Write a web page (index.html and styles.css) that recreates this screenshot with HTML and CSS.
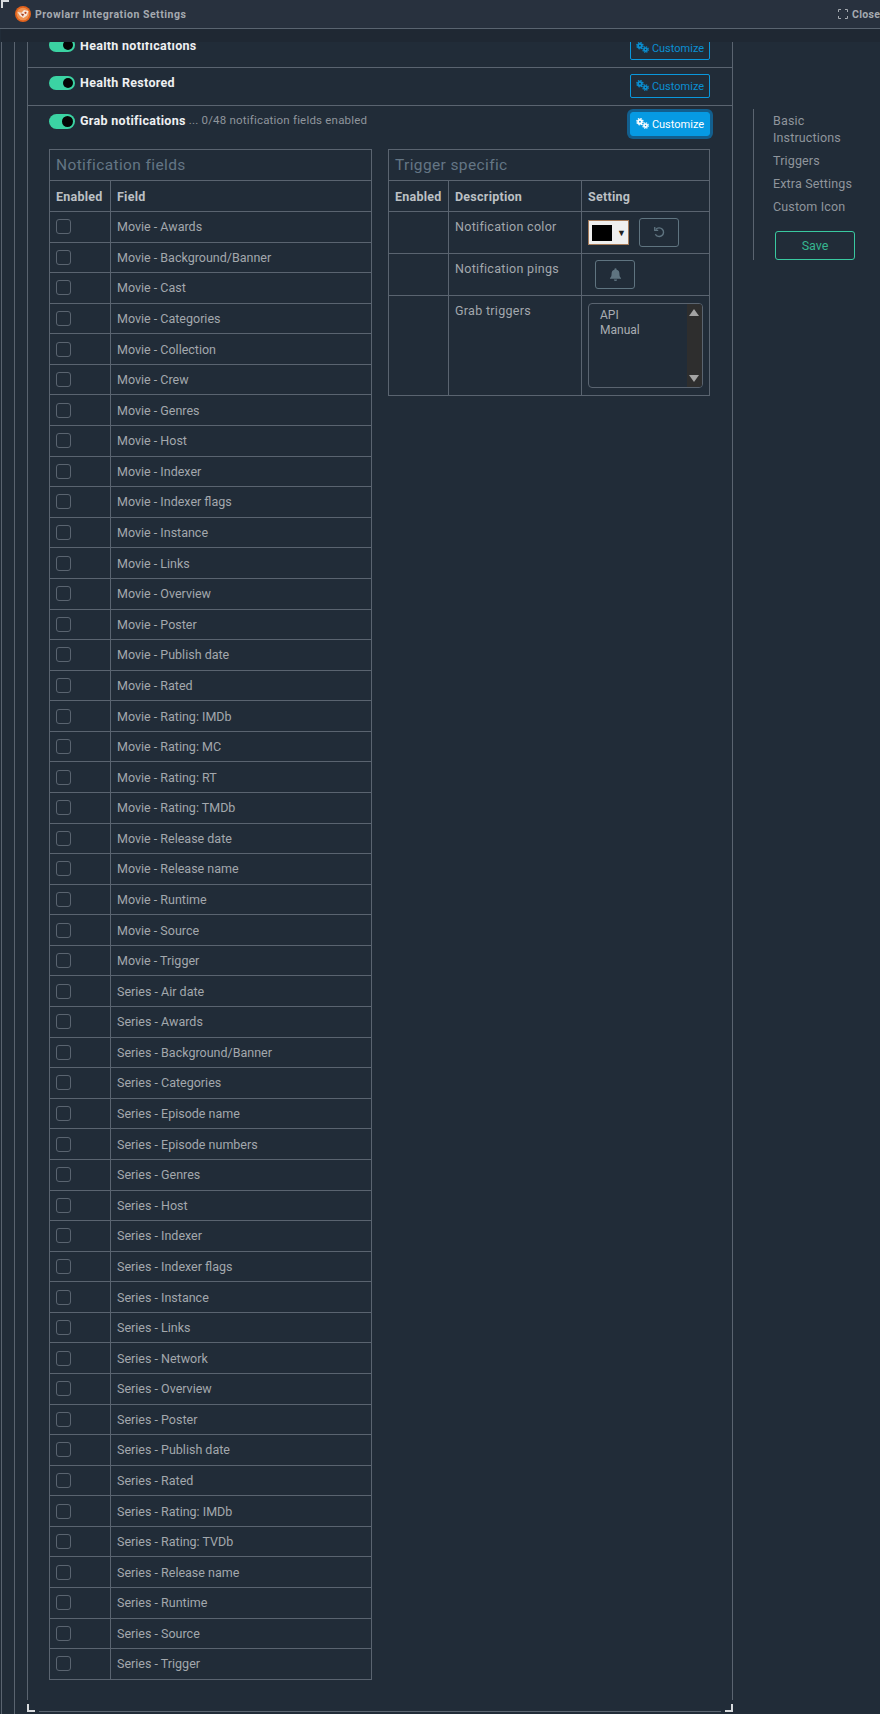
FILE: index.html
```html
<!DOCTYPE html>
<html>
<head>
    <title>Prowlarr Integration Settings</title>
    <meta charset="UTF-8">
    <link rel="stylesheet" href="styles.css">
</head>
<body>
    <svg class="icon-defs" width="0" height="0">
        <symbol id="cogs" viewBox="0 0 14 12">
            <circle cx="4.2" cy="4" r="2" fill="none" stroke="currentColor" stroke-width="2"/>
            <circle cx="4.2" cy="4" r="3.4" fill="none" stroke="currentColor" stroke-width="1.4" stroke-dasharray="1.6 1.07"/>
            <circle cx="10.3" cy="8.2" r="1.7" fill="none" stroke="currentColor" stroke-width="1.8"/>
            <circle cx="10.3" cy="8.2" r="3" fill="none" stroke="currentColor" stroke-width="1.3" stroke-dasharray="1.4 .95"/>
        </symbol>
    </svg>

    <div class="modal">
        <span class="corner corner-top"></span>
        <header class="modal-head">
            <div class="modal-title">
                <svg class="logo" viewBox="0 0 16 16">
                    <circle cx="8" cy="8" r="8" fill="#e2621c"/>
                    <circle cx="8" cy="8" r="6.3" fill="#ee9150"/>
                    <path d="M2.5 6 L6.5 6.8 L9 4 L13.5 5 L12 9.5 L8.5 12 L5 10 Z" fill="#f6e6da"/>
                    <path d="M5.5 7.5 L9 8 L8 10.5 Z" fill="#a8401c"/>
                    <circle cx="10.5" cy="6.8" r="1.1" fill="#c2431a"/>
                </svg>
                <span>Prowlarr Integration Settings</span>
            </div>
            <div class="modal-actions">
                <svg class="expand" viewBox="0 0 10 10">
                    <path d="M.5 3V.5H3M7 .5H9.5V3M9.5 7V9.5H7M3 9.5H.5V7" fill="none" stroke="currentColor" stroke-width="1"/>
                </svg>
                <span>Close</span>
            </div>
        </header>
        <div class="modal-strip"></div>

        <div class="modal-body">
            <div class="inner">
                <main class="card">
                    <section class="notify-row first-row">
                        <div class="row-head">
                            <div class="row-label"><span class="toggle"></span><strong>Health notifications</strong></div>
                            <button class="customize"><svg class="cogs"><use href="#cogs"/></svg>Customize</button>
                        </div>
                    </section>
                    <section class="notify-row">
                        <div class="row-head">
                            <div class="row-label"><span class="toggle"></span><strong>Health Restored</strong></div>
                            <button class="customize"><svg class="cogs"><use href="#cogs"/></svg>Customize</button>
                        </div>
                    </section>
                    <section class="notify-row last-row">
                        <div class="row-head">
                            <div class="row-label"><span class="toggle toggle-big"></span><strong>Grab notifications</strong><span class="row-note">... 0/48 notification fields enabled</span></div>
                            <button class="customize active"><svg class="cogs"><use href="#cogs"/></svg>Customize</button>
                        </div>

                        <div class="tables">
                            <table class="fields">
                                <colgroup><col class="col-enabled"><col></colgroup>
                                <thead>
                                    <tr><th colspan="2" class="table-title">Notification fields</th></tr>
                                    <tr><th>Enabled</th><th>Field</th></tr>
                                </thead>
                                <tbody>
                                    <tr><td><span class="check"></span></td><td>Movie - Awards</td></tr>
                                    <tr><td><span class="check"></span></td><td>Movie - Background/Banner</td></tr>
                                    <tr><td><span class="check"></span></td><td>Movie - Cast</td></tr>
                                    <tr><td><span class="check"></span></td><td>Movie - Categories</td></tr>
                                    <tr><td><span class="check"></span></td><td>Movie - Collection</td></tr>
                                    <tr><td><span class="check"></span></td><td>Movie - Crew</td></tr>
                                    <tr><td><span class="check"></span></td><td>Movie - Genres</td></tr>
                                    <tr><td><span class="check"></span></td><td>Movie - Host</td></tr>
                                    <tr><td><span class="check"></span></td><td>Movie - Indexer</td></tr>
                                    <tr><td><span class="check"></span></td><td>Movie - Indexer flags</td></tr>
                                    <tr><td><span class="check"></span></td><td>Movie - Instance</td></tr>
                                    <tr><td><span class="check"></span></td><td>Movie - Links</td></tr>
                                    <tr><td><span class="check"></span></td><td>Movie - Overview</td></tr>
                                    <tr><td><span class="check"></span></td><td>Movie - Poster</td></tr>
                                    <tr><td><span class="check"></span></td><td>Movie - Publish date</td></tr>
                                    <tr><td><span class="check"></span></td><td>Movie - Rated</td></tr>
                                    <tr><td><span class="check"></span></td><td>Movie - Rating: IMDb</td></tr>
                                    <tr><td><span class="check"></span></td><td>Movie - Rating: MC</td></tr>
                                    <tr><td><span class="check"></span></td><td>Movie - Rating: RT</td></tr>
                                    <tr><td><span class="check"></span></td><td>Movie - Rating: TMDb</td></tr>
                                    <tr><td><span class="check"></span></td><td>Movie - Release date</td></tr>
                                    <tr><td><span class="check"></span></td><td>Movie - Release name</td></tr>
                                    <tr><td><span class="check"></span></td><td>Movie - Runtime</td></tr>
                                    <tr><td><span class="check"></span></td><td>Movie - Source</td></tr>
                                    <tr><td><span class="check"></span></td><td>Movie - Trigger</td></tr>
                                    <tr><td><span class="check"></span></td><td>Series - Air date</td></tr>
                                    <tr><td><span class="check"></span></td><td>Series - Awards</td></tr>
                                    <tr><td><span class="check"></span></td><td>Series - Background/Banner</td></tr>
                                    <tr><td><span class="check"></span></td><td>Series - Categories</td></tr>
                                    <tr><td><span class="check"></span></td><td>Series - Episode name</td></tr>
                                    <tr><td><span class="check"></span></td><td>Series - Episode numbers</td></tr>
                                    <tr><td><span class="check"></span></td><td>Series - Genres</td></tr>
                                    <tr><td><span class="check"></span></td><td>Series - Host</td></tr>
                                    <tr><td><span class="check"></span></td><td>Series - Indexer</td></tr>
                                    <tr><td><span class="check"></span></td><td>Series - Indexer flags</td></tr>
                                    <tr><td><span class="check"></span></td><td>Series - Instance</td></tr>
                                    <tr><td><span class="check"></span></td><td>Series - Links</td></tr>
                                    <tr><td><span class="check"></span></td><td>Series - Network</td></tr>
                                    <tr><td><span class="check"></span></td><td>Series - Overview</td></tr>
                                    <tr><td><span class="check"></span></td><td>Series - Poster</td></tr>
                                    <tr><td><span class="check"></span></td><td>Series - Publish date</td></tr>
                                    <tr><td><span class="check"></span></td><td>Series - Rated</td></tr>
                                    <tr><td><span class="check"></span></td><td>Series - Rating: IMDb</td></tr>
                                    <tr><td><span class="check"></span></td><td>Series - Rating: TVDb</td></tr>
                                    <tr><td><span class="check"></span></td><td>Series - Release name</td></tr>
                                    <tr><td><span class="check"></span></td><td>Series - Runtime</td></tr>
                                    <tr><td><span class="check"></span></td><td>Series - Source</td></tr>
                                    <tr><td><span class="check"></span></td><td>Series - Trigger</td></tr>
                                </tbody>
                            </table>

                            <table class="triggers">
                                <colgroup><col class="col-enabled"><col class="col-desc"><col></colgroup>
                                <thead>
                                    <tr><th colspan="3" class="table-title">Trigger specific</th></tr>
                                    <tr><th>Enabled</th><th>Description</th><th>Setting</th></tr>
                                </thead>
                                <tbody>
                                    <tr class="row-color">
                                        <td></td>
                                        <td>Notification color</td>
                                        <td>
                                            <div class="setting-line">
                                                <span class="color-input"><span class="swatch"></span><span class="caret">▼</span></span>
                                                <button class="icon-btn">
                                                    <svg viewBox="0 0 12 12" class="btn-icon"><path d="M2.6 3.2A4 4 0 1 1 2.2 7.6" fill="none" stroke="currentColor" stroke-width="1.3"/><path d="M1.6 .9V4.1H4.8" fill="none" stroke="currentColor" stroke-width="1.2"/></svg>
                                                </button>
                                            </div>
                                        </td>
                                    </tr>
                                    <tr class="row-pings">
                                        <td></td>
                                        <td>Notification pings</td>
                                        <td>
                                            <button class="icon-btn bell-btn">
                                                <svg viewBox="0 0 12 12" class="btn-icon"><path d="M6 .3a1 1 0 0 1 1 1v.4A3.6 3.6 0 0 1 9.6 5.2c0 2.7.8 3.3 1.5 4.1v.7H.9v-.7c.7-.8 1.5-1.4 1.5-4.1A3.6 3.6 0 0 1 5 1.7v-.4a1 1 0 0 1 1-1zM4.5 10.6h3a1.5 1.4 0 0 1-3 0z" fill="currentColor"/></svg>
                                            </button>
                                        </td>
                                    </tr>
                                    <tr class="row-grab">
                                        <td></td>
                                        <td>Grab triggers</td>
                                        <td>
                                            <div class="listbox">
                                                <ul class="options">
                                                    <li>API</li>
                                                    <li>Manual</li>
                                                </ul>
                                                <div class="scrollbar"><span class="arrow-up"></span><span class="arrow-down"></span></div>
                                            </div>
                                        </td>
                                    </tr>
                                </tbody>
                            </table>
                        </div>
                    </section>
                    <span class="corner corner-bl"></span>
                    <span class="corner corner-br"></span>
                </main>

                <aside class="side-nav">
                    <a>Basic Instructions</a>
                    <a>Triggers</a>
                    <a>Extra Settings</a>
                    <a>Custom Icon</a>
                    <button class="save">Save</button>
                </aside>
            </div>
        </div>
    </div>
</body>
</html>
```

FILE: styles.css
```css
* {
    box-sizing: border-box;
}
html, body {
    margin: 0;
    height: 1714px;
    overflow: hidden;
}
body {
    font-family: "Roboto", "Liberation Sans", sans-serif;
    font-size: 12.5px;
    color: #a3a8ad;
    background-color: #212c38;
}
button {
    font-family: inherit;
}
.icon-defs {
    position: absolute;
}
.modal {
    position: relative;
    height: 1714px;
    margin-left: 1px;
    border-left: 1px solid #5a6470;
    display: flex;
    flex-direction: column;
}
.modal-head {
    height: 29px;
    flex: none;
    margin-left: -2px;
    padding-left: 15px;
    display: flex;
    justify-content: space-between;
    align-items: center;
    background-color: #28313e;
    border-bottom: 1px solid #5a6470;
}
.modal-title {
    display: flex;
    align-items: center;
    gap: 4px;
    font-size: 10.5px;
    font-weight: 700;
    letter-spacing: .52px;
    color: #a5aab0;
}
.logo {
    width: 16px;
    height: 16px;
}
.modal-actions {
    display: flex;
    align-items: center;
    gap: 4px;
    width: 42px;
    flex: none;
    font-size: 10.5px;
    font-weight: 700;
    letter-spacing: .3px;
    white-space: nowrap;
    color: #a5aab0;
}
.expand {
    width: 10px;
    height: 10px;
    flex: none;
}
.modal-strip {
    height: 13px;
    flex: none;
    margin-left: -1px;
    background-color: #1f2833;
}
.modal-body {
    flex: 1;
    min-height: 0;
    padding-left: 12px;
}
.inner {
    height: 100%;
    padding-left: 12px;
    border-left: 1px solid #5a6470;
    display: flex;
}

/* main card */
.card {
    position: relative;
    width: 706px;
    height: 1670px;
    flex: none;
    border-left: 1px solid #5a6470;
    border-right: 1px solid #5a6470;
    border-bottom: 1px solid #5a6470;
}
.notify-row {
    padding: 6px 22px 7px 21px;
    border-bottom: 1px solid #5a6470;
    overflow: hidden;
}
.first-row {
    height: 26px;
    padding-top: 0;
}
.first-row .row-head {
    margin-top: -6px;
}
.last-row {
    border-bottom: none;
}
.row-head {
    display: flex;
    justify-content: space-between;
    align-items: flex-start;
}
.row-label {
    display: flex;
    align-items: center;
    height: 18px;
}
.row-label strong {
    margin-bottom: 2px;
    color: #eef0f2;
    font-weight: 700;
    font-size: 12.5px;
    letter-spacing: .3px;
}
.first-row .row-label strong {
    margin-bottom: 0;
}
.row-note {
    margin-left: 3px;
    margin-bottom: 2px;
    font-size: 11.5px;
    letter-spacing: .2px;
    color: #8f959c;
}
.toggle {
    position: relative;
    width: 26px;
    height: 14px;
    margin-right: 5px;
    flex: none;
    border-radius: 7px;
    background-color: #3bd3a3;
}
.toggle::after {
    content: "";
    position: absolute;
    top: 2px;
    right: 2px;
    width: 10px;
    height: 10px;
    border-radius: 50%;
    background-color: #050505;
}
.toggle-big {
    height: 15px;
    border-radius: 8px;
}
.toggle-big::after {
    top: 2px;
    width: 11px;
    height: 11px;
}
.customize {
    width: 80px;
    height: 24px;
    padding: 0;
    display: flex;
    align-items: center;
    justify-content: center;
    gap: 3px;
    background: none;
    border: 1px solid #0a97dc;
    border-radius: 2px;
    color: #0a8fd2;
    font-size: 11px;
}
.cogs {
    width: 13px;
    height: 11px;
    margin-top: -2px;
}
.customize.active {
    background-color: #069ae3;
    color: #fff;
    border-color: #069ae3;
    box-shadow: 0 0 0 3px #125f8e;
    border-radius: 3px;
}

/* tables */
.tables {
    display: flex;
    align-items: flex-start;
    gap: 16px;
    margin-top: 13px;
}
table {
    table-layout: fixed;
    border-collapse: collapse;
    flex: none;
}
.fields {
    width: 323px;
}
.triggers {
    width: 322px;
}
.col-enabled {
    width: 61px;
}
.triggers .col-enabled {
    width: 60px;
}
.col-desc {
    width: 133px;
}
th, td {
    border: 1px solid #5a6470;
    padding: 0 6px;
    text-align: left;
    font-weight: 400;
}
th {
    height: 31px;
    font-weight: 700;
    font-size: 12.5px;
    letter-spacing: .25px;
    color: #bcc0c4;
}
th.table-title {
    font-size: 15.5px;
    font-weight: 400;
    letter-spacing: .38px;
    color: #647685;
}
td {
    height: 30.58px;
}
.check {
    display: block;
    width: 15px;
    height: 15px;
    border: 1px solid #5a6470;
    border-radius: 3px;
}
.triggers td {
    vertical-align: top;
    padding-top: 7px;
    padding-bottom: 0;
    letter-spacing: .3px;
}
.row-color td {
    height: 42px;
}
.row-pings td {
    height: 42px;
}
.row-grab td {
    height: 100px;
}
.setting-line {
    display: flex;
    align-items: flex-start;
    gap: 10px;
    margin-top: -1px;
}
.color-input {
    width: 41px;
    height: 25px;
    margin-top: 2px;
    padding: 3px;
    display: flex;
    align-items: center;
    background-color: #efefef;
    border: 1px solid #a67c5b;
}
.swatch {
    width: 20px;
    height: 16px;
    flex: none;
    background-color: #000;
}
.caret {
    margin-left: 5px;
    font-size: 9px;
    color: #222;
}
.icon-btn {
    width: 40px;
    height: 29px;
    padding: 0;
    display: flex;
    align-items: center;
    justify-content: center;
    background: none;
    border: 1px solid #5f7480;
    border-radius: 3px;
    color: #5f7480;
}
.bell-btn {
    margin-left: 7px;
}
.btn-icon {
    width: 13px;
    height: 13px;
}
.row-pings td:last-child {
    padding-top: 0;
    vertical-align: middle;
}
.row-grab td:last-child {
    padding-top: 7px;
}
.listbox {
    width: 115px;
    height: 85px;
    display: flex;
    border: 1px solid #5a6470;
    border-radius: 4px;
    overflow: hidden;
}
.options {
    flex: 1;
    margin: 0;
    padding: 4px 11px;
    list-style: none;
    font-size: 12px;
    letter-spacing: 0;
    line-height: 15px;
    color: #a9adb2;
}
.scrollbar {
    width: 15px;
    flex: none;
    padding: 5px 2px;
    display: flex;
    flex-direction: column;
    justify-content: space-between;
    background-color: #2e2e2e;
}
.arrow-up, .arrow-down {
    width: 0;
    height: 0;
    border-left: 5.5px solid transparent;
    border-right: 5.5px solid transparent;
}
.arrow-up {
    border-bottom: 7px solid #a3a3a3;
}
.arrow-down {
    border-top: 7px solid #a3a3a3;
}

/* side nav */
.side-nav {
    width: 103px;
    height: 151px;
    margin-top: 67px;
    margin-left: 20px;
    padding-top: 3px;
    padding-left: 19px;
    border-left: 1px solid #5a6470;
    display: flex;
    flex-direction: column;
    align-items: flex-start;
    flex: none;
    font-size: 12.5px;
    letter-spacing: .15px;
    line-height: 17px;
    color: #8f959c;
}
.side-nav a {
    display: block;
    width: 82px;
    margin-bottom: 6px;
}
.save {
    width: 80px;
    height: 29px;
    margin-top: auto;
    margin-left: 2px;
    padding: 0;
    background: none;
    border: 1px solid #39c9a0;
    border-radius: 3px;
    color: #36b690;
    font-size: 12.5px;
}

/* frame corners */
.corner {
    position: absolute;
    width: 8px;
    height: 8px;
}
.corner-top {
    top: 0;
    left: -1px;
    border-top: 2px solid #d8dbde;
    border-left: 2px solid #d8dbde;
    z-index: 2;
}
.corner-bl {
    left: -1px;
    bottom: -1px;
    border-left: 2px solid #d8dbde;
    border-bottom: 2px solid #d8dbde;
    box-shadow: 0 0 0 4px #212c38;
}
.corner-br {
    right: -1px;
    bottom: -1px;
    border-right: 2px solid #d8dbde;
    border-bottom: 2px solid #d8dbde;
    box-shadow: 0 0 0 4px #212c38;
}
```
